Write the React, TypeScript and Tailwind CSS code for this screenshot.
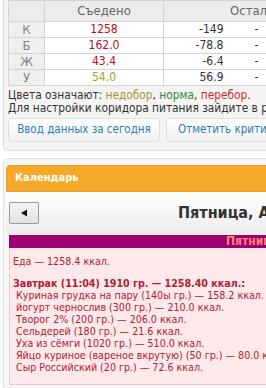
import React from 'react';

const font = { fontFamily: "Tahoma, 'DejaVu Sans Condensed', 'DejaVu Sans', sans-serif" };

const rows = [
  { k: 'К', eaten: '1258', left: '-149', cls: 'text-[#b3121b]' },
  { k: 'Б', eaten: '162.0', left: '-78.8', cls: 'text-[#b3121b]' },
  { k: 'Ж', eaten: '43.4', left: '-6.4', cls: 'text-[#b3121b]' },
  { k: 'У', eaten: '54.0', left: '56.9', cls: 'text-[#a3a320]' },
];

const items = [
  'Куриная грудка на пару (140ы гр.) — 158.2 ккал.',
  'йогурт чернослив (300 гр.) — 210.0 ккал.',
  'Творог 2% (200 гр.) — 206.0 ккал.',
  'Сельдерей (180 гр.) — 21.6 ккал.',
  'Уха из сёмги (1020 гр.) — 510.0 ккал.',
  'Яйцо куриное (вареное вкрутую) (50 гр.) — 80.0 ккал.',
  'Сыр Российский (20 гр.) — 72.6 ккал.',
];

export default function App() {
  return (
    <div className="w-[266px] h-[388px] overflow-hidden bg-white text-[12px] text-[#222] [font-stretch:condensed]" style={font}>
      {/* summary panel */}
      <div className="ml-[3px] w-[300px] h-[151px] bg-[#f4f4f4] border-l border-b border-[#dcdcdc] rounded-bl-[5px] pl-[4px]">
        <table className="table-fixed w-[300px] border-collapse bg-white text-center text-[12px]">
          <colgroup>
            <col className="w-[36px]" />
            <col className="w-[119px]" />
            <col className="w-[84px]" />
            <col className="w-[61px]" />
          </colgroup>
          <thead>
            <tr className="h-[19px] bg-[#ececec] text-[#666] text-[13px]">
              <th className="border border-[#d4d4d4] font-normal"></th>
              <th className="border border-[#d4d4d4] font-normal">Съедено</th>
              <th colSpan={2} className="border border-[#d4d4d4] font-normal text-left pl-[66px]">Осталось</th>
            </tr>
          </thead>
          <tbody>
            {rows.map((r) => (
              <tr key={r.k} className="h-[16px] leading-none">
                <td className="border border-[#d4d4d4] bg-[#efefef] text-[#808080] text-[13px]">{r.k}</td>
                <td className={`border border-[#d4d4d4] ${r.cls}`}>{r.eaten}</td>
                <td className="border-y border-l border-[#d4d4d4] text-right pr-[24px] text-[#333]">{r.left}</td>
                <td className="border-y border-r border-[#d4d4d4] text-left pl-[7px] text-[#333]">-</td>
              </tr>
            ))}
          </tbody>
        </table>
        <div className="mt-[3px] leading-[13px] whitespace-nowrap text-[#333] text-[11.8px]">
          Цвета означают: <span className="text-[#9b9b2c]">недобор</span>,{' '}
          <span className="text-[#2e8b2e]">норма</span>, <span className="text-[#d02a2a]">перебор</span>.
        </div>
        <div className="leading-[13px] whitespace-nowrap text-[#333] text-[11.8px]">
          Для настройки коридора питания зайдите в раздел
        </div>
        <div className="flex gap-[6px] mt-[3px]">
          <div className="w-[152px] h-[24px] shrink-0 flex items-center justify-center rounded-[3px] border border-[#dedede] bg-gradient-to-b from-[#ffffff] to-[#f1f1f1] text-[#2a7fb4] text-[11.5px] whitespace-nowrap">
            Ввод данных за сегодня
          </div>
          <div className="w-[160px] h-[24px] shrink-0 flex items-center pl-[11px] rounded-[3px] border border-[#dedede] bg-gradient-to-b from-[#ffffff] to-[#f1f1f1] text-[#2a7fb4] text-[11.5px] whitespace-nowrap">
            Отметить критичное
          </div>
        </div>
      </div>

      {/* calendar panel */}
      <div className="mt-[7px] ml-[3px] w-[300px] h-[240px] bg-[#f7f7f7] border-l border-t border-[#e2e2e2] rounded-tl-[5px] pl-[2px] pt-[6px]">
        <div className="h-[27px] bg-[#f6a828] border border-[#e9a02a] rounded-t-[4px] flex items-center pl-[8px] text-white font-bold text-[11px]">
          Календарь
        </div>
        <div className="h-[42px] bg-gradient-to-b from-[#ffffff] to-[#ececec] flex items-center pl-[3px]">
          <div className="w-[30px] h-[22px] shrink-0 border border-[#9a9a9a] rounded-[2px] bg-gradient-to-b from-[#f6f6f6] to-[#e2e2e2] flex items-center justify-center">
            <svg width="8" height="8" viewBox="0 0 8 8">
              <polygon points="1,4 7,0.5 7,7.5" fill="#111" />
            </svg>
          </div>
          <div className="ml-[139px] shrink-0 text-[16px] font-bold text-[#333] whitespace-nowrap">Пятница, Август</div>
        </div>
        <div className="ml-[3px] mt-[1px] h-[13px] bg-[#a0006f] text-[#ff8078] font-bold text-[12px] leading-[13px] whitespace-nowrap pl-[217px]">
          Пятница
        </div>
        <div className="ml-[3px] h-[137px] bg-[#fde9ea] border-l border-b border-[#f2c7cb] text-[#ad2230] text-[10.6px] leading-[12px] pl-[3px] pt-[7px] whitespace-nowrap">
          <div>Еда — 1258.4 ккал.</div>
          <div className="mt-[10px] font-bold">Завтрак (11:04) 1910 гр. — 1258.40 ккал.:</div>
          {items.map((t) => (
            <div key={t} className="pl-[3px]">{t}</div>
          ))}
        </div>
      </div>
    </div>
  );
}
